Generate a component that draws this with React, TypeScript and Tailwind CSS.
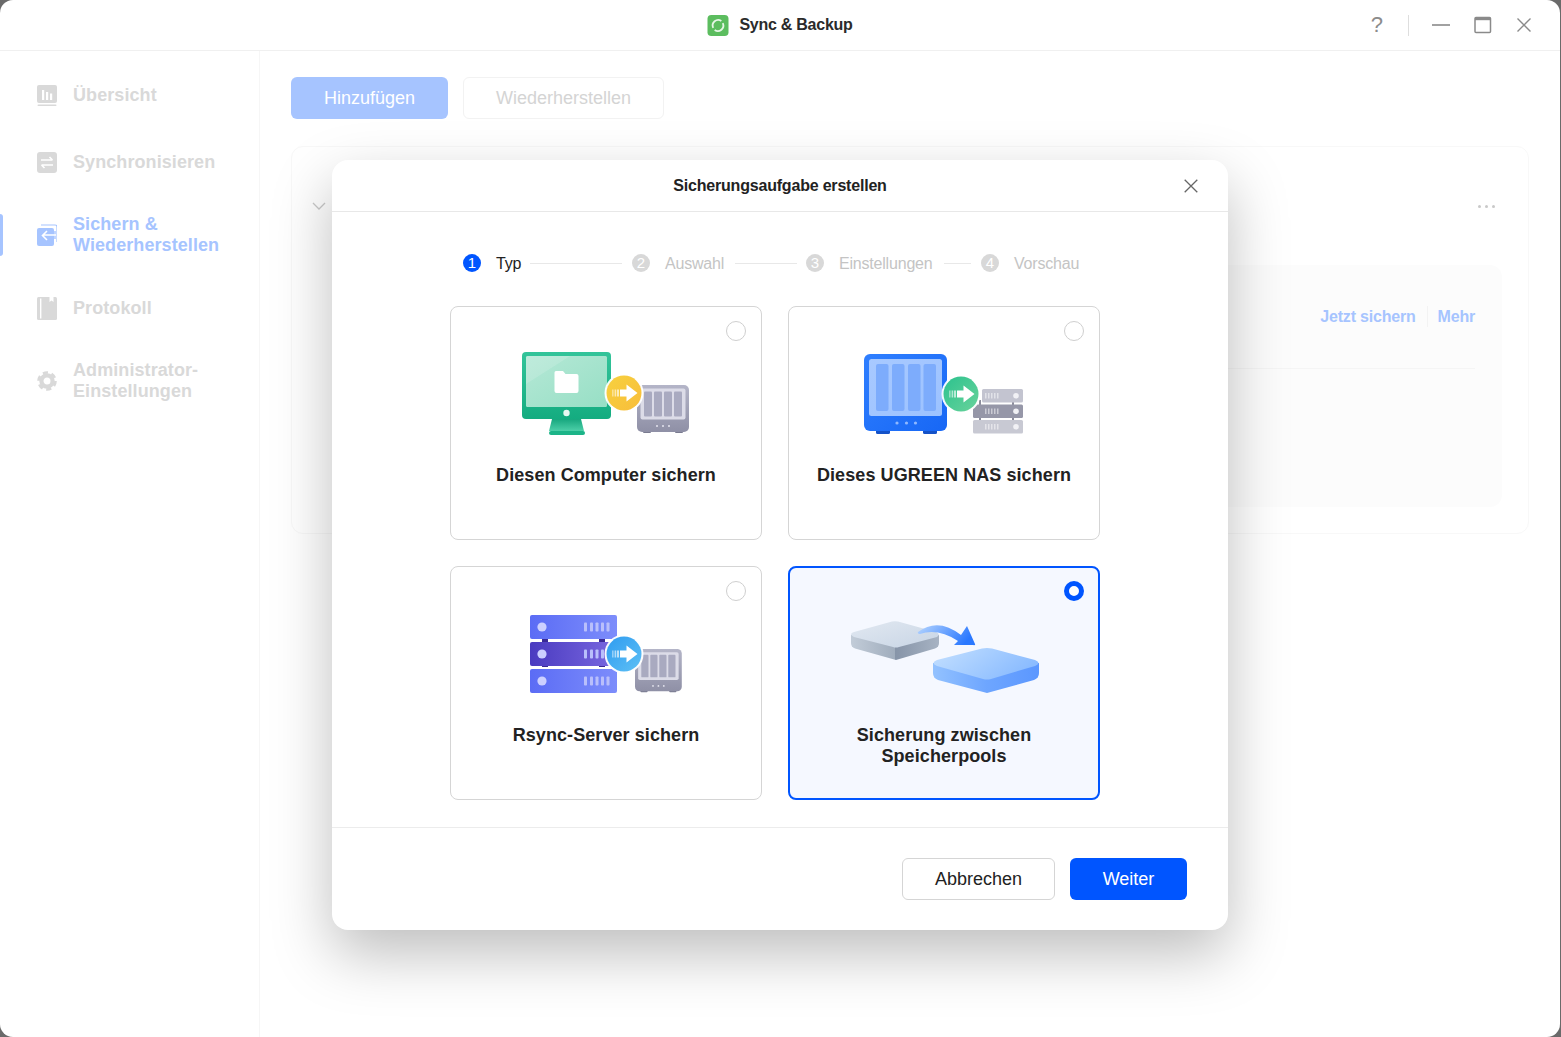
import React from "react";

const font = { fontFamily: '"Liberation Sans", Arial, sans-serif' };

function Badge({ cx, cy, id, from, to }: { cx: number; cy: number; id: string; from: string; to: string }) {
  return (
    <g transform={`translate(${cx} ${cy})`}>
      <defs>
        <linearGradient id={id} x1="0" y1="0" x2="1" y2="1">
          <stop offset="0" stopColor={from} />
          <stop offset="1" stopColor={to} />
        </linearGradient>
      </defs>
      <circle r="19.5" fill="#ffffff" opacity="0.95" />
      <circle r="17.5" fill={`url(#${id})`} />
      <rect x="-12" y="-3.5" width="1.6" height="7" fill="#fff" opacity="0.45" />
      <rect x="-9.4" y="-3.5" width="1.6" height="7" fill="#fff" opacity="0.6" />
      <rect x="-6.8" y="-3.5" width="1.6" height="7" fill="#fff" opacity="0.8" />
      <path d="M-4 -3.5 H2.5 V-8.5 L13.5 0 L2.5 8.5 V3.5 H-4 Z" fill="#fff" />
    </g>
  );
}

function MiniNas({ x, y, scale, id }: { x: number; y: number; scale: number; id: string }) {
  return (
    <g transform={`translate(${x} ${y}) scale(${scale})`}>
      <defs>
        <linearGradient id={id} x1="0" y1="0" x2="0" y2="1">
          <stop offset="0" stopColor="#b4b5c8" />
          <stop offset="1" stopColor="#8f90a6" />
        </linearGradient>
      </defs>
      <rect x="6" y="45" width="8" height="3" rx="1" fill="#7a7b90" />
      <rect x="38" y="45" width="8" height="3" rx="1" fill="#7a7b90" />
      <rect x="0" y="0" width="52" height="47" rx="5" fill={`url(#${id})`} />
      <rect x="3.5" y="3.5" width="45" height="31" rx="2" fill="#dcdce8" />
      <rect x="7" y="6.5" width="8" height="25" rx="1" fill="#a9aac0" />
      <rect x="17" y="6.5" width="8" height="25" rx="1" fill="#a9aac0" />
      <rect x="27" y="6.5" width="8" height="25" rx="1" fill="#a9aac0" />
      <rect x="37" y="6.5" width="8" height="25" rx="1" fill="#a9aac0" />
      <circle cx="20" cy="41" r="1" fill="#e5e5ee" />
      <circle cx="26" cy="41" r="1" fill="#e5e5ee" />
      <circle cx="32" cy="41" r="1" fill="#e5e5ee" />
    </g>
  );
}

function ComputerArt() {
  return (
    <svg viewBox="486 340 240 100" className="block h-[100px] w-[240px]">
      <defs>
        <linearGradient id="mon" x1="0" y1="0" x2="0" y2="1">
          <stop offset="0" stopColor="#33c49a" />
          <stop offset="1" stopColor="#14ac80" />
        </linearGradient>
        <linearGradient id="scr" x1="0" y1="0" x2="1" y2="1">
          <stop offset="0" stopColor="#b5e8d6" />
          <stop offset="1" stopColor="#97dfc5" />
        </linearGradient>
        <linearGradient id="std" x1="0" y1="0" x2="0" y2="1">
          <stop offset="0" stopColor="#17a77e" />
          <stop offset="1" stopColor="#4dcfa8" />
        </linearGradient>
      </defs>
      <path d="M552 419 H581 L584 431 H549 Z" fill="url(#std)" />
      <rect x="549" y="431" width="36" height="4" rx="2" fill="#1cb488" />
      <rect x="522" y="352" width="89" height="67" rx="4" fill="url(#mon)" />
      <rect x="526" y="356" width="81" height="51" rx="1.5" fill="url(#scr)" />
      <path d="M526 356 H570 L526 384 Z" fill="#ffffff" opacity="0.14" />
      <circle cx="566.5" cy="413" r="3.2" fill="#e7f8f2" />
      <path d="M554.5 372.5 q0-1.5 1.5-1.5 h7 l2.5 3 h11 q2 0 2 2 v15 q0 2-2 2 h-20 q-2 0-2-2 Z" fill="#ffffff" />
      <MiniNas x={637} y={385} scale={1} id="nas1" />
      <Badge cx={624} cy={393} id="b1" from="#f7d13f" to="#f8bd3a" />
    </svg>
  );
}

function NasArt() {
  const rows = [
    { y: 389, fill: "#c3c4d0", x: 982 },
    { y: 404.5, fill: "#9697a8", x: 973 },
    { y: 420, fill: "#c8c9d3", x: 973 },
  ];
  return (
    <svg viewBox="824 340 240 100" className="block h-[100px] w-[240px]">
      <defs>
        <linearGradient id="nb" x1="0" y1="0" x2="1" y2="1">
          <stop offset="0" stopColor="#2f7fff" />
          <stop offset="1" stopColor="#1767f5" />
        </linearGradient>
        <linearGradient id="np" x1="0" y1="0" x2="1" y2="1">
          <stop offset="0" stopColor="#a8c9ff" />
          <stop offset="1" stopColor="#9cc2ff" />
        </linearGradient>
      </defs>
      <rect x="876" y="428" width="14" height="6" rx="1.5" fill="#1452c8" />
      <rect x="923" y="428" width="14" height="6" rx="1.5" fill="#1452c8" />
      <rect x="864" y="354" width="83" height="77" rx="6" fill="url(#nb)" />
      <rect x="869" y="359" width="73" height="57" rx="2.5" fill="url(#np)" />
      {[876, 892, 908, 923.5].map((x) => (
        <rect key={x} x={x} y="364" width="12.5" height="47" rx="2" fill="#7dacfc" />
      ))}
      {[897, 906.5, 915.5].map((x) => (
        <circle key={x} cx={x} cy="423" r="1.6" fill="#8fb8ff" />
      ))}
      <rect x="979" y="400" width="2" height="24" fill="#8c8d9c" />
      <rect x="1012" y="400" width="2" height="24" fill="#8c8d9c" />
      {rows.map((r) => (
        <g key={r.y}>
          <rect x={r.x} y={r.y} width={1023 - r.x} height="13.5" rx="1.5" fill={r.fill} />
          {[985, 988, 991, 994, 997].map((x) => (
            <rect key={x} x={x} y={r.y + 4} width="1.5" height="5.5" fill="#fff" opacity="0.5" />
          ))}
          <circle cx="1016" cy={r.y + 6.75} r="2.8" fill="#f1f1f5" />
        </g>
      ))}
      <Badge cx={961} cy={394} id="b2" from="#2cc28e" to="#69d39b" />
    </svg>
  );
}

function RsyncArt() {
  const rows = [
    { y: 615, fill: "url(#r1)" },
    { y: 642, fill: "url(#r2)" },
    { y: 669, fill: "url(#r1)" },
  ];
  return (
    <svg viewBox="486 600 240 100" className="block h-[100px] w-[240px]">
      <defs>
        <linearGradient id="r1" x1="0" y1="0" x2="1" y2="0">
          <stop offset="0" stopColor="#5b6cf5" />
          <stop offset="1" stopColor="#7d8dfb" />
        </linearGradient>
        <linearGradient id="r2" x1="0" y1="0" x2="1" y2="0">
          <stop offset="0" stopColor="#4a3bc0" />
          <stop offset="1" stopColor="#7a68e0" />
        </linearGradient>
      </defs>
      <rect x="542" y="637" width="6" height="30" fill="#3a2a96" />
      <rect x="599" y="637" width="6" height="30" fill="#3a2a96" />
      {rows.map((r) => (
        <g key={r.y}>
          <rect x="530" y={r.y} width="87" height="24" rx="2" fill={r.fill} />
          <circle cx="542" cy={r.y + 12} r="4.6" fill="#ccd0ff" />
          {[584, 590, 595.5, 601, 606.5].map((x) => (
            <rect key={x} x={x} y={r.y + 7.5} width="3" height="9" rx="0.8" fill="#b9bffb" />
          ))}
        </g>
      ))}
      <MiniNas x={635} y={649} scale={0.9} id="nas3" />
      <Badge cx={624} cy={654} id="b3" from="#2f9cf0" to="#5ec0f5" />
    </svg>
  );
}

function PoolArt() {
  return (
    <svg viewBox="824 600 240 100" className="block h-[100px] w-[240px]">
      <defs>
        <linearGradient id="p1t" x1="0" y1="0" x2="1" y2="1">
          <stop offset="0" stopColor="#e1e8f1" />
          <stop offset="1" stopColor="#c8d5e5" />
        </linearGradient>
        <linearGradient id="p1s" x1="0" y1="0" x2="1" y2="0">
          <stop offset="0" stopColor="#c2ccd8" />
          <stop offset="0.5" stopColor="#a0adbd" />
          <stop offset="0.5" stopColor="#8694a8" />
          <stop offset="1" stopColor="#a7b3c3" />
        </linearGradient>
        <linearGradient id="p2t" x1="0" y1="0" x2="1" y2="0.4">
          <stop offset="0" stopColor="#c4e0ff" />
          <stop offset="1" stopColor="#8bbcff" />
        </linearGradient>
        <linearGradient id="p2s" x1="0" y1="0" x2="1" y2="0">
          <stop offset="0" stopColor="#93c2ff" />
          <stop offset="0.5" stopColor="#6ea6ff" />
          <stop offset="1" stopColor="#5b97ff" />
        </linearGradient>
        <linearGradient id="arr" x1="0" y1="0" x2="1" y2="0.3">
          <stop offset="0" stopColor="#b5d5ff" />
          <stop offset="1" stopColor="#2a78ff" />
        </linearGradient>
      </defs>
      <path d="M851 635 V643 Q851 647 855 648.5 L896 660 L935 648.5 Q939 647 939 643 V635 Z" fill="url(#p1s)" />
      <path d="M854 632 L892 621.5 Q895 621 898 621.5 L936 632 Q941 634 937 637 L899 647 Q896 648 893 647 L854 637 Q848 634 854 632 Z" fill="url(#p1t)" />
      <path d="M933 663 V673 Q933 678 938 680 L987 693 L1034 680 Q1039 678 1039 673 V663 Z" fill="url(#p2s)" />
      <path d="M937 660 L982 648.5 Q987 647.5 992 648.5 L1035 660 Q1042 663 1035 666 L991 679 Q987 680 983 679 L937 666 Q930 663 937 660 Z" fill="url(#p2t)" />
      <path d="M918 632 Q938 617 961 635 L967 626 L975 644 Q976 645.5 973 645 L954 645 L958 641 Q938 628 920 634 Q917 633.5 918 632 Z" fill="url(#arr)" />
    </svg>
  );
}

function Radio({ selected }: { selected?: boolean }) {
  return selected ? (
    <span className="absolute right-[14px] top-[13px] h-5 w-5 rounded-full border-[5px] border-[#0055ff] bg-white" />
  ) : (
    <span className="absolute right-[15px] top-[14px] h-5 w-5 rounded-full border border-[#cfcfcf] bg-white" />
  );
}

function OptionCard({ label, art, selected }: { label: React.ReactNode; art: React.ReactNode; selected?: boolean }) {
  return (
    <div
      className={
        selected
          ? "relative flex h-[234px] w-[312px] flex-col items-center rounded-lg border-2 border-[#0055ff] bg-[#f5f8ff] pt-[32px]"
          : "relative flex h-[234px] w-[312px] flex-col items-center rounded-lg border border-[#d5d5d5] bg-white pt-[33px]"
      }
    >
      <Radio selected={selected} />
      {art}
      <div className="mt-[25px] px-2 text-center text-[18px] font-bold leading-[21px] tracking-[0.08px] text-[#222222]">{label}</div>
    </div>
  );
}

function Step({ n, label, active, width }: { n: number; label: string; active?: boolean; width: string }) {
  return (
    <div className="flex items-center">
      <span
        className={
          active
            ? "flex h-[18px] w-[18px] items-center justify-center rounded-full bg-[#0055ff] text-[15px] text-white"
            : "flex h-[18px] w-[18px] items-center justify-center rounded-full bg-[#d8d8d8] text-[15px] text-white"
        }
      >
        {n}
      </span>
      <span className={active ? `ml-[15px] mt-[2px] text-[16px] tracking-[-0.2px] text-[#222222] ${width}` : `ml-[15px] mt-[2px] text-[16px] tracking-[-0.2px] text-[#c4c4c4] ${width}`}>{label}</span>
    </div>
  );
}

function NavIcon({ kind }: { kind: string }) {
  if (kind === "overview")
    return (
      <svg viewBox="0 0 20 22" className="h-[22px] w-5">
        <path d="M2 0 H18 Q20 0 20 2 V16 Q20 18 18 18 H2 Q0 18 0 16 V2 Q0 0 2 0 Z" fill="#d9d9d9" />
        <rect x="0.5" y="19.5" width="19" height="1.6" rx="0.8" fill="#d9d9d9" />
        <rect x="5" y="5" width="2.2" height="10" fill="#fff" />
        <rect x="9" y="7" width="2.2" height="8" fill="#fff" />
        <rect x="13" y="8.5" width="2.2" height="6.5" fill="#fff" />
      </svg>
    );
  if (kind === "sync")
    return (
      <svg viewBox="0 0 20 21" className="h-[21px] w-5">
        <rect width="20" height="21" rx="3" fill="#d9d9d9" />
        <path d="M4 8 H15.5 M12.5 5 L15.5 8 M16 13 H4.5 M7.5 16 L4.5 13" stroke="#fff" strokeWidth="1.6" fill="none" />
      </svg>
    );
  if (kind === "backup")
    return (
      <svg viewBox="0 0 20 22" className="h-[22px] w-5">
        <path d="M4 1 H18 Q20 1 20 3 V18" stroke="#a6c4ff" strokeWidth="1.2" fill="none" />
        <rect x="0" y="4" width="17" height="18" rx="2" fill="#a6c4ff" />
        <path d="M18 7 V15" stroke="#a6c4ff" strokeWidth="1.4" />
        <path d="M19 11 H6 M10 7 L5.5 11.5 L10 16" stroke="#fff" strokeWidth="1.6" fill="none" />
      </svg>
    );
  if (kind === "log")
    return (
      <svg viewBox="0 0 20 23" className="h-[23px] w-5">
        <rect width="20" height="23" rx="1.5" fill="#d9d9d9" />
        <rect x="3" y="1.5" width="1.4" height="20" fill="#fff" />
        <path d="M12.5 0 H16.5 V5 L14.5 3.6 L12.5 5 Z" fill="#fff" />
      </svg>
    );
  return (
    <svg viewBox="0 0 20 20" className="h-5 w-5">
      <circle cx="10" cy="10" r="8.5" fill="none" stroke="#d9d9d9" strokeWidth="2.6" strokeDasharray="5.2 3.7" />
      <circle cx="10" cy="10" r="5.6" fill="none" stroke="#d9d9d9" strokeWidth="4.2" />
    </svg>
  );
}

function NavItem({ kind, children, active, h, mt }: { kind: string; children: React.ReactNode; active?: boolean; h: string; mt: string }) {
  return (
    <div className={`relative flex items-center pl-[37px] ${h} ${mt}`}>
      {active && <span className="absolute left-0 top-0 h-full w-[3px] rounded-r-sm bg-[#a6c4ff]" />}
      <span className="flex w-5 justify-center">
        <NavIcon kind={kind} />
      </span>
      <span className={active ? "ml-4 text-[18px] font-bold leading-[21px] tracking-[0.08px] text-[#a6c4ff]" : "ml-4 text-[18px] font-bold leading-[21px] tracking-[0.08px] text-[#d9d9d9]"}>
        {children}
      </span>
    </div>
  );
}

export default function App() {
  return (
    <div className="h-[1037px] w-[1561px] overflow-hidden bg-[#6a6a6a]" style={font}>
      <div className="relative flex h-[1037px] w-[1560px] flex-col overflow-hidden rounded-[13px] bg-white">
        <header className="grid h-[51px] shrink-0 grid-cols-[1fr_auto_1fr] items-center border-b border-[#f0f0f0]">
          <div />
          <div className="flex items-center">
            <svg viewBox="0 0 22 22" className="h-[21px] w-[22px]">
              <rect width="22" height="22" rx="4" fill="#5cbd5f" />
              <path d="M6 13.5 A5.8 5.8 0 0 1 14.5 6.2" stroke="#e6f6e6" strokeWidth="1.9" fill="none" />
              <path d="M16 8.5 A5.8 5.8 0 0 1 7.5 15.8" stroke="#e6f6e6" strokeWidth="1.9" fill="none" />
            </svg>
            <span className="ml-[10px] text-[16px] font-bold tracking-[-0.25px] text-[#2b2b2b]">Sync &amp; Backup</span>
          </div>
          <div className="flex items-center justify-end pr-[28px]">
            <span className="text-[22px] leading-none text-[#8c8c8c]">?</span>
            <span className="ml-[25px] h-[21px] w-px bg-[#dedede]" />
            <svg viewBox="0 0 18 18" className="ml-[23px] h-[18px] w-[18px]">
              <path d="M0 9 H18" stroke="#8a8a8a" strokeWidth="1.6" />
            </svg>
            <svg viewBox="0 0 18 18" className="ml-[24px] h-[18px] w-[18px]">
              <rect x="1" y="1.5" width="15.5" height="15" rx="1" fill="none" stroke="#8a8a8a" strokeWidth="1.5" />
              <path d="M1 3 H16.5" stroke="#8a8a8a" strokeWidth="2.4" />
            </svg>
            <svg viewBox="0 0 16 16" className="ml-[24px] h-4 w-4">
              <path d="M1.5 1.5 L14.5 14.5 M14.5 1.5 L1.5 14.5" stroke="#8a8a8a" strokeWidth="1.4" />
            </svg>
          </div>
        </header>

        <div className="flex min-h-0 flex-1">
          <aside className="w-[260px] shrink-0 border-r border-[#f6f6f6] pt-[34px]">
            <NavItem kind="overview" h="h-[21px]" mt="mt-0">Übersicht</NavItem>
            <NavItem kind="sync" h="h-[21px]" mt="mt-[46px]">Synchronisieren</NavItem>
            <NavItem kind="backup" active h="h-[42px]" mt="mt-[41px]">
              Sichern &amp;<br />Wiederherstellen
            </NavItem>
            <NavItem kind="log" h="h-[21px]" mt="mt-[42px]">Protokoll</NavItem>
            <NavItem kind="gear" h="h-[42px]" mt="mt-[41px]">
              Administrator-<br />Einstellungen
            </NavItem>
          </aside>

          <main className="flex-1 pl-[31px] pr-[31px] pt-[26px]">
            <div className="flex gap-[15px]">
              <button className="h-[42px] w-[157px] rounded-md bg-[#a6c4ff] text-[18px] text-white">Hinzufügen</button>
              <button className="h-[42px] w-[201px] rounded-md border border-[#f2f2f2] text-[18px] text-[#d4d4d4]">Wiederherstellen</button>
            </div>
            <section className="mt-[27px] h-[388px] rounded-xl border border-[#f8f8f8] pl-[20px] pr-[26px]">
              <div className="flex h-[118px] items-start justify-between">
                <svg viewBox="0 0 14 8" className="mt-[55px] h-2 w-[14px]">
                  <path d="M1 1 L7 7 L13 1" stroke="#c9c9c9" strokeWidth="1.3" fill="none" />
                </svg>
                <div className="mr-[7px] mt-[58px] flex gap-[4px]">
                  <span className="h-[3px] w-[3px] rounded-full bg-[#c9c9c9]" />
                  <span className="h-[3px] w-[3px] rounded-full bg-[#c9c9c9]" />
                  <span className="h-[3px] w-[3px] rounded-full bg-[#c9c9c9]" />
                </div>
              </div>
              <div className="ml-[28px] h-[242px] rounded-xl bg-[#fcfcfc] px-[27px]">
                <div className="flex h-[103px] items-center justify-end text-[16px] font-bold tracking-[-0.2px] text-[#a6c4ff]">
                  <span>Jetzt sichern</span>
                  <span className="ml-[11px] mr-[10px] h-[21px] w-px bg-[#f3f3f3]" />
                  <span>Mehr</span>
                </div>
                <div className="h-px bg-[#f5f5f5]" />
              </div>
            </section>
          </main>
        </div>

        <div className="absolute left-[332px] top-[160px] flex h-[770px] w-[896px] flex-col rounded-[16px] bg-white shadow-[0_24px_60px_rgba(0,0,0,0.26)]">
          <div className="relative flex h-[52px] shrink-0 items-center justify-center border-b border-[#e8e8e8]">
            <span className="text-[16px] font-bold tracking-[-0.2px] text-[#222222]">Sicherungsaufgabe erstellen</span>
            <svg viewBox="0 0 14 14" className="absolute right-[30px] top-[19px] h-[14px] w-[14px]">
              <path d="M0.7 0.7 L13.3 13.3 M13.3 0.7 L0.7 13.3" stroke="#666666" strokeWidth="1.3" />
            </svg>
          </div>

          <div className="ml-[131px] mt-[42px] flex h-[18px] items-center">
            <Step n={1} label="Typ" active width="w-[25px]" />
            <span className="ml-[9px] mr-[10px] h-px w-[92px] bg-[#e8e8e8]" />
            <Step n={2} label="Auswahl" width="w-[60px]" />
            <span className="ml-[10px] mr-[9px] h-px w-[62px] bg-[#e8e8e8]" />
            <Step n={3} label="Einstellungen" width="w-[94px]" />
            <span className="ml-[11px] mr-[10px] h-px w-[27px] bg-[#e8e8e8]" />
            <Step n={4} label="Vorschau" width="w-[66px]" />
          </div>

          <div className="ml-[118px] mt-[34px] grid w-[650px] grid-cols-2 gap-[26px]">
            <OptionCard label="Diesen Computer sichern" art={<ComputerArt />} />
            <OptionCard label="Dieses UGREEN NAS sichern" art={<NasArt />} />
            <OptionCard label="Rsync-Server sichern" art={<RsyncArt />} />
            <OptionCard label={<>Sicherung zwischen<br />Speicherpools</>} art={<PoolArt />} selected />
          </div>

          <div className="mt-[27px] flex flex-1 items-start justify-end gap-[15px] border-t border-[#ececec] pr-[41px] pt-[30px]">
            <button className="h-[42px] w-[153px] rounded-md border border-[#d5d5d5] bg-white text-[18px] text-[#222222]">Abbrechen</button>
            <button className="h-[42px] w-[117px] rounded-md bg-[#0055ff] text-[18px] text-white">Weiter</button>
          </div>
        </div>
      </div>
    </div>
  );
}
